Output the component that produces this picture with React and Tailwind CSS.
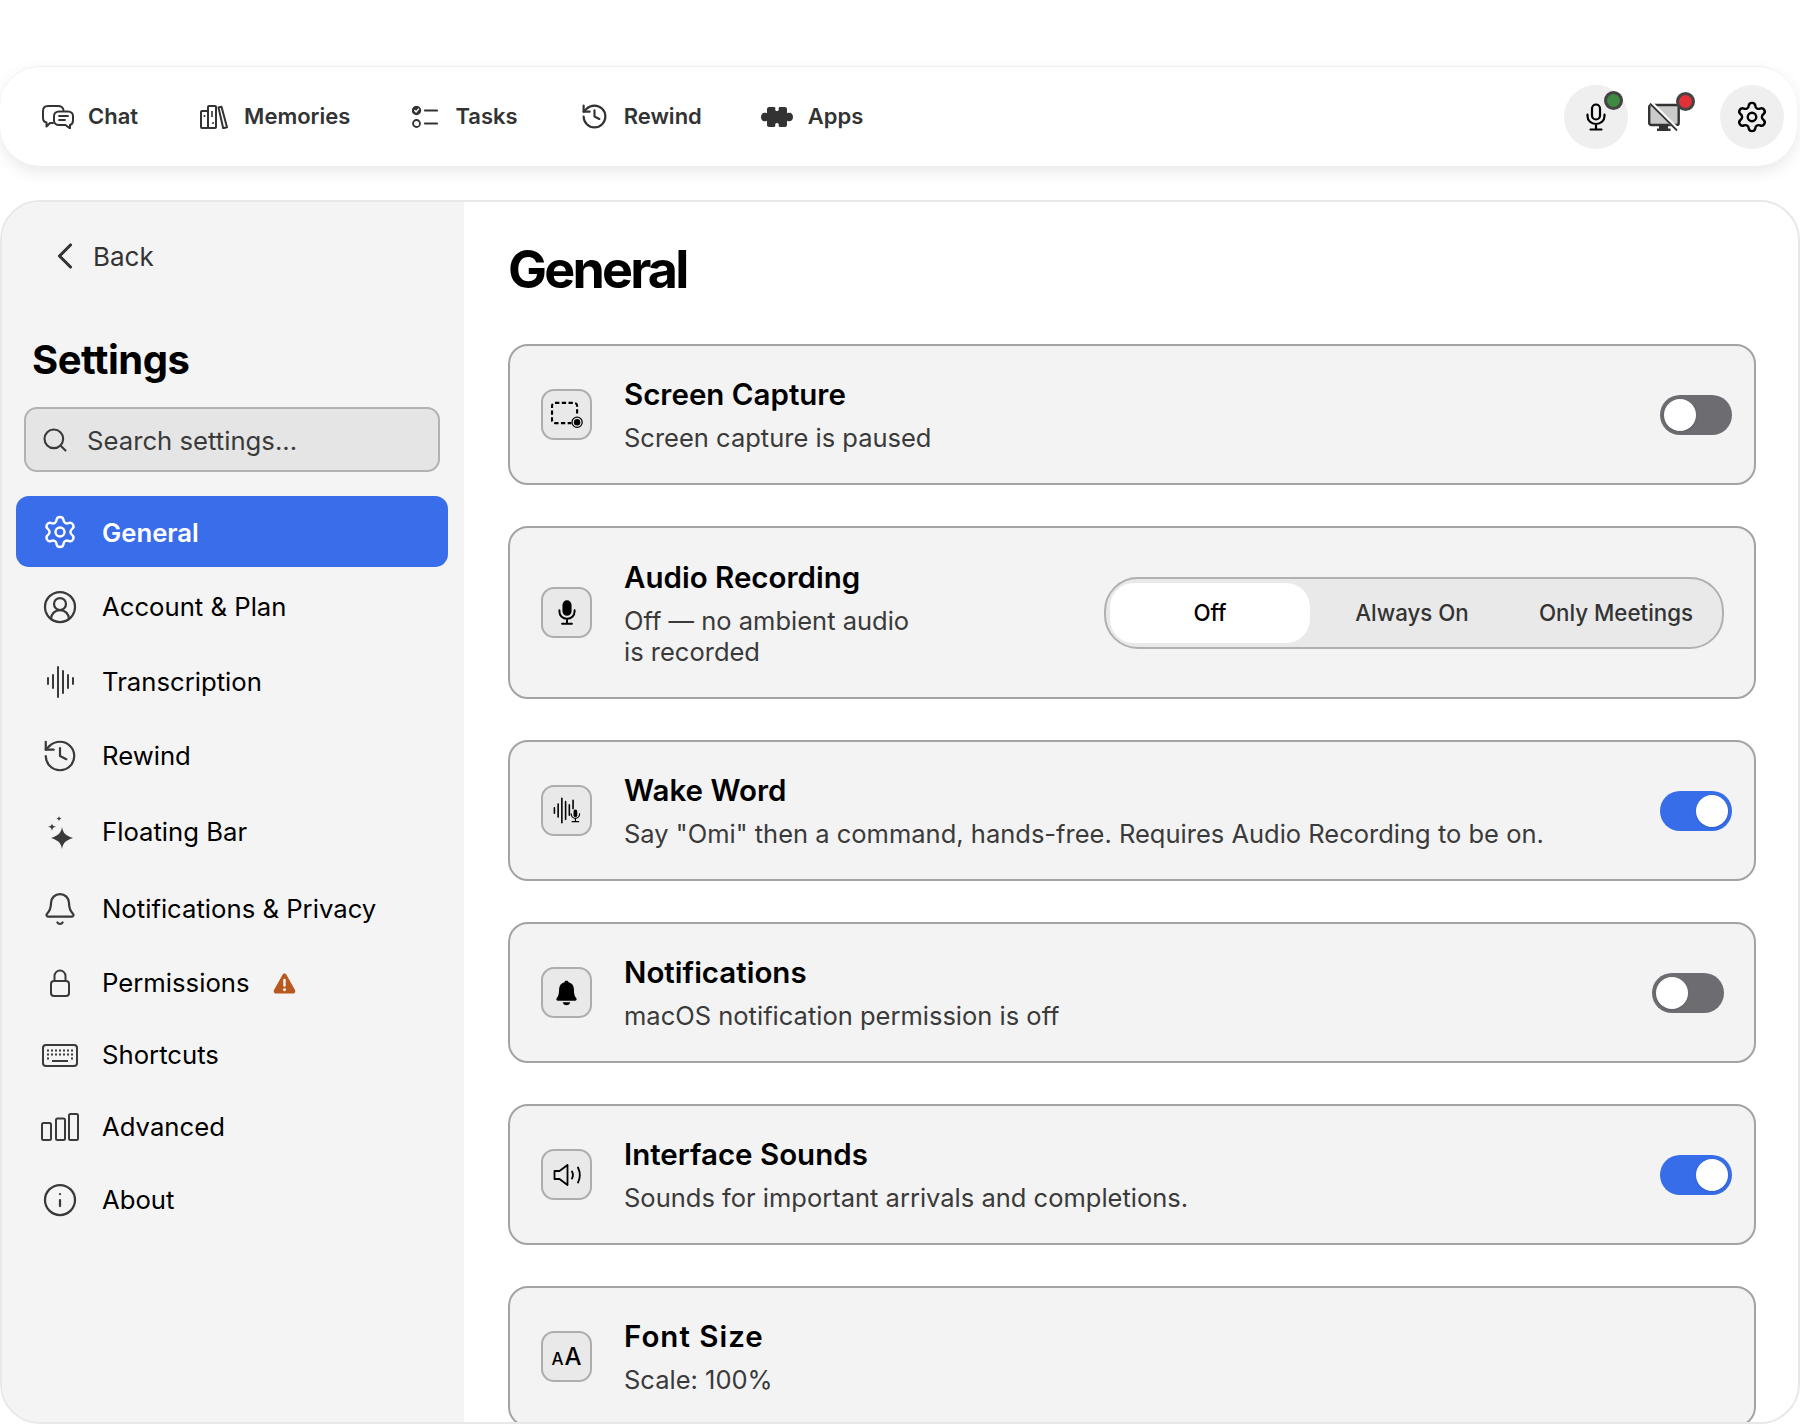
import { ChevronLeft, Search, Settings, CircleUserRound, History, Bell, Info } from "lucide-react";

function Waveform({ className }) {
    return (
        <svg viewBox="0 0 28 32" className={className} fill="none" stroke="currentColor" strokeWidth="2" strokeLinecap="round">
            <path d="M2 12v6M7 9v13M12 1v30M17 5v22M22 9v13M27 12v6" />
        </svg>
    );
}

function Sparkles({ className }) {
    return (
        <svg viewBox="2 0 25 33" className={className} fill="currentColor">
            <path d="M16 11C17 16.500 18.500 19 27 22 18.500 25 17 27.500 16 33 15 27.500 13.500 25 5 22 13.500 19 15 16.500 16 11z" />
            <path d="M6 7.500c.5 2 1.200 2.800 4 3.300-2.800.5-3.500 1.300-4 4.200-.5-2.900-1.200-3.700-4-4.200 2.800-.5 3.500-1.300 4-3.300z" />
            <path d="M13 0c.3 1.500.8 2 2.500 2.500C13.800 3 13.300 3.500 13 5.500c-.3-2-.8-2.500-2.500-3C12.200 2 12.700 1.500 13 0z" />
        </svg>
    );
}

function Keyboard({ className }) {
    const keys = [];
    [6.5, 10.5, 14.5].forEach((y, r) => {
        [6, 10, 14, 18, 22, 26, 30].forEach((x) => {
            if (r === 2 && x > 6 && x < 30) return;
            keys.push(<rect key={x + "-" + y} x={x - 1} y={y - 1} width="2" height="2" fill="currentColor" />);
        });
    });
    return (
        <svg viewBox="0 0 36 23" className={className} fill="none" stroke="currentColor" strokeWidth="2">
            <rect x="1" y="1" width="34" height="21" rx="3" />
            <g stroke="none">{keys}</g>
            <path d="M10 17h16" strokeWidth="2" />
        </svg>
    );
}

function Bars({ className }) {
    return (
        <svg viewBox="0 0 38 28" className={className} fill="none" stroke="currentColor" strokeWidth="2">
            <rect x="1" y="10" width="9" height="17" rx="1.500" />
            <rect x="15" y="5.500" width="9" height="21.500" rx="1.500" />
            <rect x="28" y="1" width="9" height="26" rx="1.500" />
        </svg>
    );
}

function LockIcon({ className }) {
    return (
        <svg viewBox="0 0 20 28" className={className} fill="none" stroke="currentColor" strokeWidth="2">
            <rect x="1" y="12" width="18" height="15" rx="3" />
            <path d="M4.500 12V7a5.500 5.500 0 0 1 11 0v5" />
        </svg>
    );
}

function WarnIcon({ className }) {
    return (
        <svg viewBox="0 0 24 22" className={className}>
            <path fill="#b9591f" d="M12 .500c.9 0 1.500.5 2 1.300l9 16c.8 1.600 0 3.700-1.800 3.700H2.800C1 21.500.2 19.400 1 17.800l9-16C10.500 1 11.100.500 12 .500z" />
            <rect x="10.800" y="6" width="2.400" height="8.500" rx="1.200" fill="#fff" />
            <circle cx="12" cy="17.500" r="1.500" fill="#fff" />
        </svg>
    );
}

function BellFilled({ className }) {
    return (
        <svg viewBox="2 1 20 24.500" className={className} fill="currentColor">
            <path d="M12 1.500c-1 0-1.800.7-1.900 1.700C6.800 4 5 6.700 5 10c0 4.500-.8 6.300-2 7.800-.9 1.100-.9 2.700.8 2.700h16.400c1.700 0 1.700-1.600.8-2.700-1.200-1.500-2-3.300-2-7.800 0-3.300-1.800-6-5.100-6.800-.1-1-.9-1.700-1.900-1.700z" />
            <path d="M8.500 22h7c-.3 1.800-1.700 2.800-3.500 2.800S8.800 23.800 8.500 22z" />
        </svg>
    );
}

function MicIcon({ className, filled }) {
    return (
        <svg viewBox="0 0 20 28" className={className} fill="none" stroke="currentColor" strokeWidth="2.200" strokeLinecap="round">
            <rect x="6" y="1.500" width="8" height="15" rx="4" fill={filled ? "currentColor" : "none"} />
            <path d="M1.500 11.500v1.500c0 4.800 3.800 8 8.500 8s8.500-3.200 8.500-8v-1.500M10 21v5M4.500 26.500h11" />
        </svg>
    );
}

function CaptureIcon({ className }) {
    return (
        <svg viewBox="0 0 34 28" className={className} fill="none" stroke="currentColor" strokeWidth="2.200">
            <path d="M28 13V5a3 3 0 0 0-3-3H5a3 3 0 0 0-3 3v15a3 3 0 0 0 3 3h17" strokeDasharray="4.500 2.500" />
            <circle cx="28" cy="22" r="5.300" strokeWidth="1.300" />
            <circle cx="28" cy="22" r="3.300" fill="currentColor" stroke="none" />
        </svg>
    );
}

function WakeIcon({ className }) {
    return (
        <svg viewBox="0 0 30 28" className={className} fill="none" stroke="currentColor" strokeLinecap="round">
            <path d="M1.500 11v6M5.500 7v14M9.500 1v26M13.500 4.500v19M17.500 8v11M21.500 3v9" strokeWidth="1.700" />
            <rect x="22" y="13" width="4" height="8" rx="2" fill="currentColor" stroke="none" />
            <path d="M19.500 17.500c0 3 2.300 4.800 4.500 4.800s4.500-1.800 4.500-4.800M24 22.500v3M20.500 26h7" strokeWidth="1.300" />
        </svg>
    );
}

function SpeakerIcon({ className }) {
    return (
        <svg viewBox="0 0 28 22" className={className} fill="none" stroke="currentColor" strokeWidth="1.800" strokeLinecap="round" strokeLinejoin="round">
            <path d="M1.500 7v8h5l8 6V1l-8 6z" />
            <path d="M19 7.500c1.200 2.200 1.200 4.800 0 7M25 3.500c2.200 4.500 2.200 10.500 0 15" />
        </svg>
    );
}

function ChatIcon({ className }) {
    return (
        <svg viewBox="0 0 32 24" className={className} fill="none" stroke="#333" strokeWidth="2" strokeLinejoin="round" strokeLinecap="round">
            <path d="M11 18H8l-3.500 3.500V17.500C2.200 17 1 15.500 1 13V6c0-3 2-5 5-5h10c3 0 5 1.500 5.500 4" />
            <path d="M17 6.500h9c3 0 5 2 5 4.500v4.500c0 2.500-1.500 4-3 4.500v3.500l-4.500-3.500H17c-3 0-5-2-5-4.500V11c0-2.500 2-4.500 5-4.500z" />
            <path d="M17 11h9M17 15h6" strokeWidth="1.800" />
        </svg>
    );
}

function BooksIcon({ className }) {
    return (
        <svg viewBox="0 0 28 24" className={className} fill="none" stroke="#333" strokeWidth="2" strokeLinejoin="round">
            <rect x="1" y="6" width="7" height="17" rx="1" />
            <rect x="8" y="1" width="8" height="22" rx="1" />
            <path d="M18.500 2.500l3-.8 5.500 20.500-3.800 1z" />
            <path d="M4.500 10v2M12 6v6M12 18h2" strokeWidth="1.600" />
        </svg>
    );
}

function TasksIcon({ className }) {
    return (
        <svg viewBox="0 0 26 22" className={className} fill="none" stroke="#333" strokeWidth="1.800" strokeLinecap="round">
            <circle cx="4.500" cy="4.500" r="3.800" fill="#333" />
            <path d="M2.800 4.500l1.300 1.400 2.400-2.800" stroke="#fff" strokeWidth="1.400" />
            <circle cx="4.500" cy="17.500" r="3.500" />
            <path d="M13 4.500h12M13 17.500h12" strokeWidth="2.200" />
        </svg>
    );
}

function PuzzleIcon({ className }) {
    return (
        <svg viewBox="0 0 32 22" className={className} fill="#333">
            <path d="M8 1h5c1 0 1.500.8 1.300 1.800-.2 1 0 2.200 1.700 2.200s1.900-1.200 1.700-2.200C17.500 1.800 18 1 19 1h5c1 0 2 1 2 2v4.500c.5-.8 1.500-.8 2.500-.8C30.500 6.700 32 8.500 32 11s-1.500 4.300-3.500 4.300c-1 0-2-.1-2.500-.8V19c0 1-1 2-2 2h-5c-1 0-1.500-.8-1.300-1.800.2-1 0-2.200-1.700-2.200s-1.900 1.200-1.700 2.200c.2 1-.3 1.800-1.300 1.800H8c-1 0-2-1-2-2v-4.500c-.5.700-1.500.8-2.500.8C1.500 15.300 0 13.500 0 11s1.500-4.300 3.500-4.300c1 0 2 0 2.500.8V3c0-1 1-2 2-2z" />
        </svg>
    );
}

function MonitorOff({ className }) {
    return (
        <svg viewBox="0 0 32 28" className={className} fill="none">
            <rect x="1.200" y="2" width="29.500" height="20" rx="2" fill="#cacaca" stroke="#333" strokeWidth="2.400" />
            <path d="M11 23h9v2.500h2.500V28H9v-2.500h2z" fill="#333" />
            <path d="M3 0l27 27" stroke="#fff" strokeWidth="4" />
            <path d="M2 .500l27 27" stroke="#333" strokeWidth="1.800" />
        </svg>
    );
}

const navItems = [
    { label: "Chat", gap: "gap-[14px]", icon: <ChatIcon className="w-8 h-6" /> },
    { label: "Memories", gap: "gap-[16px]", icon: <BooksIcon className="w-7 h-6" /> },
    { label: "Tasks", gap: "gap-[17px]", icon: <TasksIcon className="w-[26px] h-[22px]" /> },
    { label: "Rewind", gap: "gap-[15px]", icon: <History className="w-[29px] h-[29px] text-[#333]" strokeWidth={1.800} /> },
    { label: "Apps", gap: "gap-[15px] -ml-[3px]", icon: <PuzzleIcon className="w-8 h-[22px]" /> },
];

const sideItems = [
    { label: "Account & Plan", mt: "", icon: <CircleUserRound className="w-9 h-9" strokeWidth={1.500} /> },
    { label: "Transcription", mt: "mt-[3px]", icon: <Waveform className="w-7 h-8" /> },
    { label: "Rewind", mt: "mt-[2px]", icon: <History className="w-[38px] h-[38px]" strokeWidth={1.400} /> },
    { label: "Floating Bar", mt: "mt-[4px]", icon: <Sparkles className="w-[27px] h-[33px]" /> },
    { label: "Notifications & Privacy", mt: "mt-[5px]", icon: <Bell className="w-9 h-9" strokeWidth={1.500} /> },
    { label: "Permissions", mt: "mt-[2px]", warn: true, icon: <LockIcon className="w-5 h-7" /> },
    { label: "Shortcuts", mt: "", icon: <Keyboard className="w-9 h-[23px]" /> },
    { label: "Advanced", mt: "", icon: <Bars className="w-[38px] h-7" /> },
    { label: "About", mt: "mt-[1px]", icon: <Info className="w-9 h-9" strokeWidth={1.500} /> },
];

function Toggle({ on, className = "" }) {
    return (
        <div className={`w-[72px] h-10 shrink-0 rounded-full p-1 flex ${on ? "bg-[#376de8] justify-end" : "bg-[#6d6c71] justify-start"} ${className}`}>
            <div className="w-8 h-8 rounded-full bg-white shadow-sm" />
        </div>
    );
}

function Card({ icon, title, sub, right, titleClass = "", className = "h-[141px]" }) {
    return (
        <div className={`shrink-0 border-2 border-[#a3a3a3] rounded-[20px] bg-[#f3f3f3] pl-[31px] pr-[22px] flex items-center ${className}`}>
            <div className="w-[51px] h-[51px] shrink-0 rounded-[13px] border-2 border-[#adadad] bg-[#e9e9e9] flex items-center justify-center text-black">
                {icon}
            </div>
            <div className="ml-8 flex-1 min-w-0">
                <div className={`text-[29.5px] leading-[36px] font-semibold text-black ${titleClass}`}>{title}</div>
                <div className="text-[25.5px] leading-[31px] mt-[10px] text-[#3a3a3a]">{sub}</div>
            </div>
            {right}
        </div>
    );
}

export default function App() {
    return (
        <div className="h-[1424px] w-[1800px] overflow-hidden bg-white pt-[66px] flex flex-col font-['Inter',sans-serif]">
            <header className="h-[100px] w-[1797px] shrink-0 rounded-[40px] bg-white border-t border-[#f0f0f0] shadow-[0_6px_16px_rgba(0,0,0,0.09)] flex items-center pl-[42px] pr-[13px]">
                <nav className="flex items-center gap-[62px]">
                    {navItems.map((n) => (
                        <div key={n.label} className={`flex items-center ${n.gap}`}>
                            {n.icon}
                            <span className="text-[22px] font-semibold text-[#333]">{n.label}</span>
                        </div>
                    ))}
                </nav>
                <div className="ml-auto flex items-center">
                    <div className="relative w-16 h-16 rounded-full bg-[#efefef] flex items-center justify-center">
                        <MicIcon className="w-5 h-7 text-black" />
                        <span className="absolute top-[6px] right-[5px] w-[19px] h-[19px] rounded-full bg-[#3d8b40] border-[3px] border-[#444]" />
                    </div>
                    <div className="relative ml-1 w-16 h-16 flex items-center justify-center">
                        <MonitorOff className="w-8 h-7" />
                        <span className="absolute top-[7px] right-[1px] w-[19px] h-[19px] rounded-full bg-[#df3137] border-[3px] border-[#444]" />
                    </div>
                    <div className="ml-6 w-16 h-16 rounded-full bg-[#efefef] flex items-center justify-center">
                        <Settings className="w-[34px] h-[34px] text-black" strokeWidth={1.700} />
                    </div>
                </div>
            </header>

            <div className="mt-[34px] flex-1 min-h-0 w-[1800px] rounded-[40px] border-2 border-[#e8e8e8] overflow-hidden flex bg-white">
                <aside className="w-[462px] shrink-0 bg-[#f4f4f4] flex flex-col">
                    <div className="h-[106px] flex items-center pl-[41px] pt-[2px] text-[#333]">
                        <ChevronLeft className="w-11 h-11" strokeWidth={1.700} />
                        <span className="ml-[6px] text-[26px]">Back</span>
                    </div>
                    <h2 className="pl-[30px] mt-[28px] text-[40px] leading-[48px] font-bold text-black tracking-[-0.5px]">Settings</h2>
                    <div className="ml-[22px] mr-[24px] mt-[23px] h-[65px] rounded-[13px] border-2 border-[#b2b2b2] bg-[#e5e5e5] flex items-center pl-[15px] text-[#3a3a3a]">
                        <Search className="w-7 h-7" strokeWidth={1.800} />
                        <span className="ml-[18px] pt-[3px] text-[25.7px]">Search settings...</span>
                    </div>
                    <div className="ml-[14px] mr-[16px] mt-[24px] h-[71px] rounded-[13px] bg-[#3a6dea] flex items-center text-white">
                        <div className="w-[74px] pl-[14px] flex justify-center">
                            <Settings className="w-9 h-9" strokeWidth={1.600} />
                        </div>
                        <span className="ml-[12px] pt-[3px] text-[25.7px] font-semibold">General</span>
                    </div>
                    <div className="mt-[4px] flex flex-col">
                        {sideItems.map((s) => (
                            <div key={s.label} className={`flex items-center h-[72px] ${s.mt}`}>
                                <div className="w-[88px] pl-[28px] flex justify-center text-[#3a3a3a] shrink-0">{s.icon}</div>
                                <span className="ml-[12px] text-[25.7px] text-black">{s.label}</span>
                                {s.warn && <WarnIcon className="ml-[23px] w-[23px] h-[21px]" />}
                            </div>
                        ))}
                    </div>
                </aside>

                <main className="flex-1 min-w-0 pl-[44px] pr-[42px] flex flex-col overflow-hidden">
                    <h1 className="mt-[34px] h-[68px] text-[52px] leading-[68px] font-bold text-black tracking-[-2.8px]">General</h1>
                    <div className="mt-[40px] flex flex-col gap-[41px]">
                        <Card
                            icon={<CaptureIcon className="w-[33px] h-[27px]" />}
                            title="Screen Capture"
                            sub="Screen capture is paused"
                            right={<Toggle on={false} />}
                        />
                        <Card
                            className="h-[173px]"
                            icon={<MicIcon filled className="w-[18px] h-[25px]" />}
                            title="Audio Recording"
                            sub={<>Off — no ambient audio<br />is recorded</>}
                            right={
                                <div className="w-[620px] h-[72px] mr-[8px] shrink-0 rounded-[34px] border-2 border-[#b0b0b0] bg-[#e9e9e9] p-1 flex items-stretch text-[22.3px] font-medium">
                                    <div className="w-[200px] rounded-[24px] bg-white flex items-center justify-center text-black">Off</div>
                                    <div className="w-[204px] flex items-center justify-center text-[#333]">Always On</div>
                                    <div className="w-[204px] flex items-center justify-center text-[#333]">Only Meetings</div>
                                </div>
                            }
                        />
                        <Card
                            icon={<WakeIcon className="w-[28px] h-[27px]" />}
                            title="Wake Word"
                            sub={'Say "Omi" then a command, hands-free. Requires Audio Recording to be on.'}
                            right={<Toggle on />}
                        />
                        <Card
                            icon={<BellFilled className="w-[23px] h-[26px]" />}
                            title="Notifications"
                            sub="macOS notification permission is off"
                            right={<Toggle on={false} className="mr-2" />}
                        />
                        <Card
                            icon={<SpeakerIcon className="w-[28px] h-[22px]" />}
                            title="Interface Sounds"
                            sub="Sounds for important arrivals and completions."
                            right={<Toggle on />}
                        />
                        <Card
                            icon={<span className="flex items-baseline gap-[1px] leading-none font-medium"><span className="text-[17px]">A</span><span className="text-[24px]">A</span></span>}
                            title="Font Size"
                            titleClass="tracking-[1px]"
                            sub="Scale: 100%"
                        />
                    </div>
                </main>
            </div>
        </div>
    );
}
